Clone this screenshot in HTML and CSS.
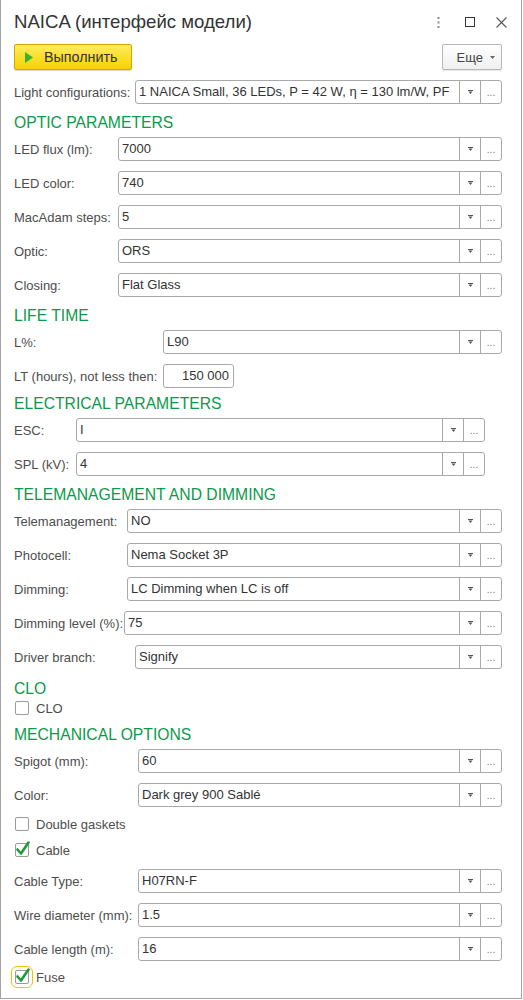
FILE: index.html
```html
<!DOCTYPE html>
<html lang="ru">
<head>
<meta charset="utf-8">
<title>NAICA</title>
<link rel="stylesheet" href="styles.css">
</head>
<body>
<div class="window">
  <div class="titlebar">
    <div class="title">NAICA (интерфейс модели)</div>
    <div class="wincontrols">
      <svg class="ic-kebab" width="3" height="11" viewBox="0 0 3 11"><rect x="0.5" y="0" width="2" height="2" fill="#8c8c8c"/><rect x="0.5" y="4.5" width="2" height="2" fill="#8c8c8c"/><rect x="0.5" y="9" width="2" height="2" fill="#8c8c8c"/></svg>
      <svg class="ic-max" width="10" height="10" viewBox="0 0 10 10"><rect x="0.5" y="0.5" width="9" height="9" fill="none" stroke="#333" stroke-width="1"/></svg>
      <svg class="ic-close" width="11" height="11" viewBox="0 0 11 11"><path d="M0.5 0.5 L10.5 10.5 M10.5 0.5 L0.5 10.5" stroke="#555" stroke-width="1.1" fill="none"/></svg>
    </div>
  </div>

  <div class="toolbar">
    <button class="btn-run"><svg width="8" height="11" viewBox="0 0 8 11"><polygon points="0,0 8,5.5 0,11" fill="#3cb030"/></svg><span>Выполнить</span></button>
    <button class="btn-more"><span>Еще</span><svg width="5" height="3" viewBox="0 0 5 3"><polygon points="0,0 5,0 2.5,3" fill="#666"/></svg></button>
  </div>

  <div class="form">
    <div class="row"><span class="lbl w121">Light configurations:</span><div class="field"><span class="val">1 NAICA Small, 36 LEDs, P = 42 W, η = 130 lm/W, PF</span><span class="fb dd"><svg width="5" height="4" viewBox="0 0 5 4"><rect x="0" y="0" width="5" height="1" fill="#555"/><polygon points="0.5,1.5 4.5,1.5 2.5,4" fill="#555"/></svg></span><span class="fb dots">...</span></div></div>

    <div class="hdr">OPTIC PARAMETERS</div>
    <div class="row"><span class="lbl w104">LED flux (lm):</span><div class="field"><span class="val">7000</span><span class="fb dd"><svg width="5" height="4" viewBox="0 0 5 4"><rect x="0" y="0" width="5" height="1" fill="#555"/><polygon points="0.5,1.5 4.5,1.5 2.5,4" fill="#555"/></svg></span><span class="fb dots">...</span></div></div>
    <div class="row"><span class="lbl w104">LED color:</span><div class="field"><span class="val">740</span><span class="fb dd"><svg width="5" height="4" viewBox="0 0 5 4"><rect x="0" y="0" width="5" height="1" fill="#555"/><polygon points="0.5,1.5 4.5,1.5 2.5,4" fill="#555"/></svg></span><span class="fb dots">...</span></div></div>
    <div class="row"><span class="lbl w104">MacAdam steps:</span><div class="field"><span class="val">5</span><span class="fb dd"><svg width="5" height="4" viewBox="0 0 5 4"><rect x="0" y="0" width="5" height="1" fill="#555"/><polygon points="0.5,1.5 4.5,1.5 2.5,4" fill="#555"/></svg></span><span class="fb dots">...</span></div></div>
    <div class="row"><span class="lbl w104">Optic:</span><div class="field"><span class="val">ORS</span><span class="fb dd"><svg width="5" height="4" viewBox="0 0 5 4"><rect x="0" y="0" width="5" height="1" fill="#555"/><polygon points="0.5,1.5 4.5,1.5 2.5,4" fill="#555"/></svg></span><span class="fb dots">...</span></div></div>
    <div class="row"><span class="lbl w104">Closing:</span><div class="field"><span class="val">Flat Glass</span><span class="fb dd"><svg width="5" height="4" viewBox="0 0 5 4"><rect x="0" y="0" width="5" height="1" fill="#555"/><polygon points="0.5,1.5 4.5,1.5 2.5,4" fill="#555"/></svg></span><span class="fb dots">...</span></div></div>

    <div class="hdr">LIFE TIME</div>
    <div class="row"><span class="lbl w149">L%:</span><div class="field"><span class="val">L90</span><span class="fb dd"><svg width="5" height="4" viewBox="0 0 5 4"><rect x="0" y="0" width="5" height="1" fill="#555"/><polygon points="0.5,1.5 4.5,1.5 2.5,4" fill="#555"/></svg></span><span class="fb dots">...</span></div></div>
    <div class="row"><span class="lbl w149">LT (hours), not less then:</span><div class="field num"><span class="val">150 000</span></div></div>

    <div class="hdr hdr-el">ELECTRICAL PARAMETERS</div>
    <div class="row short"><span class="lbl w62">ESC:</span><div class="field"><span class="val">I</span><span class="fb dd"><svg width="5" height="4" viewBox="0 0 5 4"><rect x="0" y="0" width="5" height="1" fill="#555"/><polygon points="0.5,1.5 4.5,1.5 2.5,4" fill="#555"/></svg></span><span class="fb dots">...</span></div></div>
    <div class="row short"><span class="lbl w62">SPL (kV):</span><div class="field"><span class="val">4</span><span class="fb dd"><svg width="5" height="4" viewBox="0 0 5 4"><rect x="0" y="0" width="5" height="1" fill="#555"/><polygon points="0.5,1.5 4.5,1.5 2.5,4" fill="#555"/></svg></span><span class="fb dots">...</span></div></div>

    <div class="hdr">TELEMANAGEMENT AND DIMMING</div>
    <div class="row"><span class="lbl w113">Telemanagement:</span><div class="field"><span class="val">NO</span><span class="fb dd"><svg width="5" height="4" viewBox="0 0 5 4"><rect x="0" y="0" width="5" height="1" fill="#555"/><polygon points="0.5,1.5 4.5,1.5 2.5,4" fill="#555"/></svg></span><span class="fb dots">...</span></div></div>
    <div class="row"><span class="lbl w113">Photocell:</span><div class="field"><span class="val">Nema Socket 3P</span><span class="fb dd"><svg width="5" height="4" viewBox="0 0 5 4"><rect x="0" y="0" width="5" height="1" fill="#555"/><polygon points="0.5,1.5 4.5,1.5 2.5,4" fill="#555"/></svg></span><span class="fb dots">...</span></div></div>
    <div class="row"><span class="lbl w113">Dimming:</span><div class="field"><span class="val">LC Dimming when LC is off</span><span class="fb dd"><svg width="5" height="4" viewBox="0 0 5 4"><rect x="0" y="0" width="5" height="1" fill="#555"/><polygon points="0.5,1.5 4.5,1.5 2.5,4" fill="#555"/></svg></span><span class="fb dots">...</span></div></div>
    <div class="row"><span class="lbl w110">Dimming level (%):</span><div class="field"><span class="val">75</span><span class="fb dd"><svg width="5" height="4" viewBox="0 0 5 4"><rect x="0" y="0" width="5" height="1" fill="#555"/><polygon points="0.5,1.5 4.5,1.5 2.5,4" fill="#555"/></svg></span><span class="fb dots">...</span></div></div>
    <div class="row"><span class="lbl w121">Driver branch:</span><div class="field"><span class="val">Signify</span><span class="fb dd"><svg width="5" height="4" viewBox="0 0 5 4"><rect x="0" y="0" width="5" height="1" fill="#555"/><polygon points="0.5,1.5 4.5,1.5 2.5,4" fill="#555"/></svg></span><span class="fb dots">...</span></div></div>

    <div class="hdr hdr-clo">CLO</div>
    <div class="chk chk-first"><span class="box"></span><span class="ctext">CLO</span></div>

    <div class="hdr">MECHANICAL OPTIONS</div>
    <div class="row"><span class="lbl w124">Spigot (mm):</span><div class="field"><span class="val">60</span><span class="fb dd"><svg width="5" height="4" viewBox="0 0 5 4"><rect x="0" y="0" width="5" height="1" fill="#555"/><polygon points="0.5,1.5 4.5,1.5 2.5,4" fill="#555"/></svg></span><span class="fb dots">...</span></div></div>
    <div class="row"><span class="lbl w124">Color:</span><div class="field"><span class="val">Dark grey 900 Sablé</span><span class="fb dd"><svg width="5" height="4" viewBox="0 0 5 4"><rect x="0" y="0" width="5" height="1" fill="#555"/><polygon points="0.5,1.5 4.5,1.5 2.5,4" fill="#555"/></svg></span><span class="fb dots">...</span></div></div>
    <div class="chk"><span class="box"></span><span class="ctext">Double gaskets</span></div>
    <div class="chk"><span class="box checked"><svg width="16" height="16" viewBox="0 0 16 16"><path d="M2.5 8.5 L6 12.5 L13.5 1.5" fill="none" stroke="#1e9a3a" stroke-width="2.6" stroke-linecap="round" stroke-linejoin="round"/></svg></span><span class="ctext">Cable</span></div>
    <div class="row"><span class="lbl w124">Cable Type:</span><div class="field"><span class="val">H07RN-F</span><span class="fb dd"><svg width="5" height="4" viewBox="0 0 5 4"><rect x="0" y="0" width="5" height="1" fill="#555"/><polygon points="0.5,1.5 4.5,1.5 2.5,4" fill="#555"/></svg></span><span class="fb dots">...</span></div></div>
    <div class="row"><span class="lbl w124">Wire diameter (mm):</span><div class="field"><span class="val">1.5</span><span class="fb dd"><svg width="5" height="4" viewBox="0 0 5 4"><rect x="0" y="0" width="5" height="1" fill="#555"/><polygon points="0.5,1.5 4.5,1.5 2.5,4" fill="#555"/></svg></span><span class="fb dots">...</span></div></div>
    <div class="row"><span class="lbl w124">Cable length (m):</span><div class="field"><span class="val">16</span><span class="fb dd"><svg width="5" height="4" viewBox="0 0 5 4"><rect x="0" y="0" width="5" height="1" fill="#555"/><polygon points="0.5,1.5 4.5,1.5 2.5,4" fill="#555"/></svg></span><span class="fb dots">...</span></div></div>
    <div class="chk chk-last"><span class="box checked focus"><svg width="16" height="16" viewBox="0 0 16 16"><path d="M2.5 8.5 L6 12.5 L13.5 1.5" fill="none" stroke="#1e9a3a" stroke-width="2.6" stroke-linecap="round" stroke-linejoin="round"/></svg></span><span class="ctext">Fuse</span></div>
  </div>
</div>
</body>
</html>
```

FILE: styles.css
```css
* { box-sizing: border-box; }
html, body { margin: 0; padding: 0; background: #fff; }
body {
  font-family: "Liberation Sans", Arial, sans-serif;
  font-size: 13px;
  color: #4d4d4d;
}
.window {
  width: 522px;
  height: 999px;
  border: 1px solid #a3a3a3;
  border-top: none;
  padding: 0 19px 0 12px;
  background: #fff;
}
.titlebar {
  display: flex;
  align-items: center;
  justify-content: space-between;
  padding-top: 11px;
  height: 33px;
}
.title {
  font-size: 18.6px;
  line-height: 22px;
  color: #333;
  padding-left: 1px;
}
.wincontrols {
  display: flex;
  align-items: center;
  margin-right: -5px;
  margin-top: 0;
}
.ic-kebab { margin-right: 25px; }
.ic-max { margin-right: 21px; }
.toolbar {
  display: flex;
  justify-content: space-between;
  margin-top: 11px;
  height: 26px;
  padding-left: 1px;
}
.btn-run {
  width: 118px;
  height: 26px;
  display: flex;
  align-items: center;
  padding: 0 0 0 10px;
  border: 1px solid #c9a800;
  border-radius: 2px;
  background: linear-gradient(#ffec5c, #f7d200);
  box-shadow: 0 1px 1px rgba(0,0,0,0.15);
  font-family: "Liberation Sans", Arial, sans-serif;
  font-size: 14.3px;
  color: #333;
}
.btn-run svg { margin-right: 11px; }
.btn-more {
  width: 60px;
  height: 26px;
  display: flex;
  align-items: center;
  justify-content: flex-end;
  padding: 0 6px 0 0;
  border: 1px solid #b8b8b8;
  border-radius: 2px;
  background: linear-gradient(#ffffff, #efefef);
  box-shadow: 0 1px 1px rgba(0,0,0,0.1);
  font-family: "Liberation Sans", Arial, sans-serif;
  font-size: 13px;
  color: #444;
}
.btn-more svg { margin-left: 7px; margin-top: 1px; }

.form {
  display: flex;
  flex-direction: column;
}
.row {
  display: flex;
  align-items: center;
  height: 24px;
  margin-top: 10px;
  padding-left: 1px;
}
.row.short { padding-right: 17px; }
.lbl {
  flex: 0 0 auto;
  white-space: nowrap;
  color: #4d4d4d;
}
.w62 { width: 62px; }
.w104 { width: 104px; }
.w110 { width: 110px; }
.w113 { width: 113px; }
.w121 { width: 121px; }
.w124 { width: 124px; }
.w149 { width: 149px; }
.field {
  flex: 1 1 auto;
  min-width: 0;
  height: 24px;
  display: flex;
  border: 1px solid #a9a9a9;
  border-radius: 3px;
  background: #fff;
  overflow: hidden;
}
.field .val {
  flex: 1 1 auto;
  min-width: 0;
  padding: 0 3px;
  line-height: 22px;
  color: #333;
  white-space: nowrap;
  overflow: hidden;
}
.field.num {
  flex: 0 0 71px;
}
.field.num .val { text-align: right; padding-right: 4px; }
.fb {
  flex: 0 0 21px;
  border-left: 1px solid #a9a9a9;
  display: flex;
  align-items: center;
  justify-content: center;
}
.fb.dd svg { margin-top: -1px; }
.fb.dots {
  font-size: 10px;
  color: #777;
  align-items: flex-end;
  padding-bottom: 5px;
  line-height: 10px;
}
.hdr {
  font-size: 15.7px;
  line-height: 20px;
  height: 20px;
  color: #0b9a4a;
  margin-top: 9px;
  padding-left: 1px;
}
.hdr + .row { margin-top: 4px; }
.hdr-el { margin-top: 6px; }
.hdr-clo { margin-top: 10px; }
.chk {
  display: flex;
  align-items: center;
  height: 20px;
  margin-top: 6px;
  padding-left: 2px;
}
.row + .chk { margin-top: 7px; }
.chk + .row { margin-top: 9px; }
.hdr + .chk { margin-top: -1px; }
.chk + .hdr { margin-top: 7px; }
.row + .chk-last { margin-top: 6px; }
.box {
  position: relative;
  width: 14px;
  height: 14px;
  border: 1px solid #9a9a9a;
  border-radius: 2px;
  background: #fff;
  flex: 0 0 14px;
}
.box svg {
  position: absolute;
  left: -1px;
  top: -3px;
}
.box.focus {
  outline: 1px solid #f2c400;
  outline-offset: 3px;
}
.ctext {
  margin-left: 7px;
  color: #4d4d4d;
}
```
